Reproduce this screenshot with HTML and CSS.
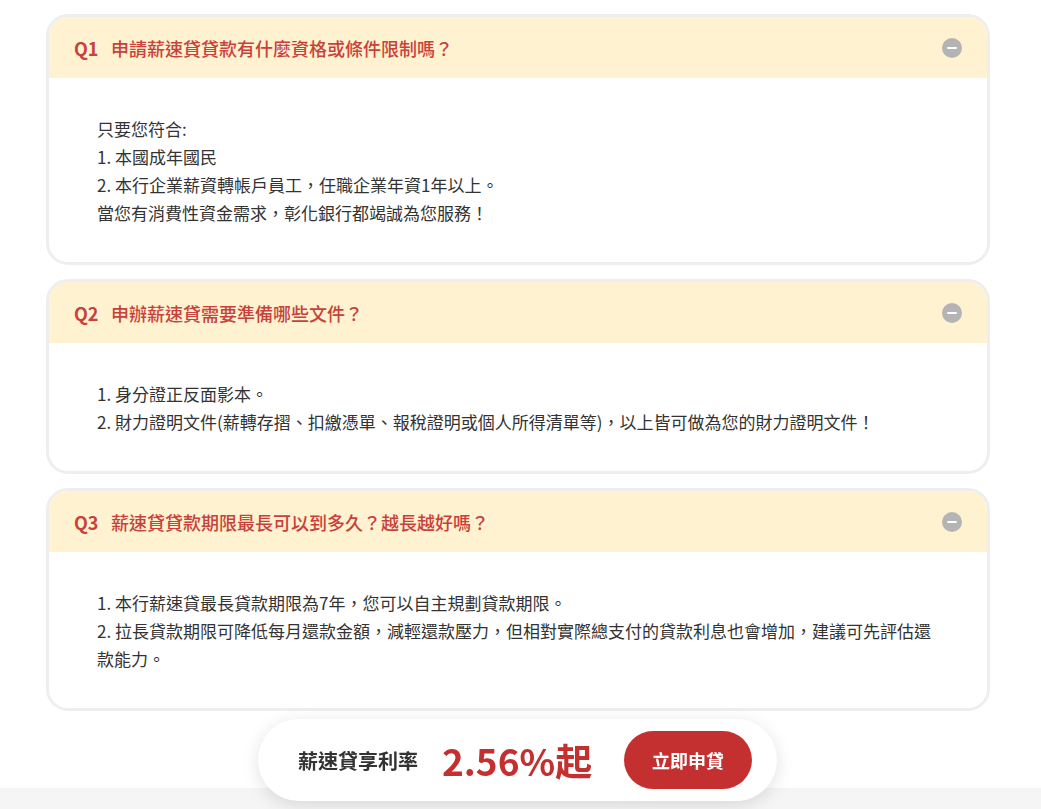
FILE: index.html
```html
<!DOCTYPE html>
<html lang="zh-Hant">
<head>
<meta charset="utf-8">
<title>FAQ</title>
<link rel="stylesheet" href="styles.css">
</head>
<body>
<main class="faq">
  <section class="card">
    <div class="card-head">
      <span class="q">Q1</span>
      <span class="title">申請薪速貸貸款有什麼資格或條件限制嗎？</span>
      <span class="toggle"></span>
    </div>
    <div class="card-body">
      <p>只要您符合:</p>
      <p>1. 本國成年國民</p>
      <p>2. 本行企業薪資轉帳戶員工，任職企業年資1年以上。</p>
      <p>當您有消費性資金需求，彰化銀行都竭誠為您服務！</p>
    </div>
  </section>
  <section class="card">
    <div class="card-head">
      <span class="q">Q2</span>
      <span class="title">申辦薪速貸需要準備哪些文件？</span>
      <span class="toggle"></span>
    </div>
    <div class="card-body">
      <p>1. 身分證正反面影本。</p>
      <p>2. 財力證明文件(薪轉存摺、扣繳憑單、報稅證明或個人所得清單等)，以上皆可做為您的財力證明文件！</p>
    </div>
  </section>
  <section class="card">
    <div class="card-head">
      <span class="q">Q3</span>
      <span class="title">薪速貸貸款期限最長可以到多久？越長越好嗎？</span>
      <span class="toggle"></span>
    </div>
    <div class="card-body">
      <p>1. 本行薪速貸最長貸款期限為7年，您可以自主規劃貸款期限。</p>
      <p>2. 拉長貸款期限可降低每月還款金額，減輕還款壓力，但相對實際總支付的貸款利息也會增加，建議可先評估還款能力。</p>
    </div>
  </section>
</main>
<footer class="footer"></footer>
<div class="promo">
  <span class="promo-label">薪速貸享利率</span>
  <span class="promo-rate">2.56%起</span>
  <a class="promo-btn" href="#">立即申貸</a>
</div>
</body>
</html>
```
FILE: styles.css
```css
* { box-sizing: border-box; }
html, body { margin: 0; padding: 0; background: #fff; }
body {
  font-family: "Noto Sans CJK TC", "Noto Sans", sans-serif;
  color: #333;
  height: 809px;
  overflow: hidden;
  display: flex;
  flex-direction: column;
}
.faq {
  width: 944px;
  margin: 0 0 0 46px;
  padding: 14px 0 77px;
  display: flex;
  flex-direction: column;
  gap: 14px;
}
.card {
  border: 3px solid #eeeeee;
  border-radius: 22px;
  overflow: hidden;
  background: #fff;
}
.card-head {
  height: 61px;
  background: #fff2d0;
  display: flex;
  align-items: center;
  padding: 0 25px 0 25px;
  color: #c8413b;
  font-size: 18px;
}
.q {
  font-weight: 700;
  width: 37px;
  flex: none;
}
.title {
  flex: 1;
  font-weight: 500;
}
.toggle {
  width: 20px;
  height: 20px;
  border-radius: 50%;
  background: #b4b4b4;
  position: relative;
  flex: none;
}
.toggle::after {
  content: "";
  position: absolute;
  left: 5px;
  top: 9px;
  width: 10px;
  height: 2.5px;
  border-radius: 1px;
  background: #fff;
}
.card-body {
  padding: 37px 48px 35px 48px;
  font-size: 17px;
  line-height: 28px;
  color: #333;
}
.card-body p { margin: 0; }
.footer {
  flex: 1;
  background: #f5f5f5;
}
.promo {
  position: fixed;
  left: 258px;
  bottom: 8px;
  width: 519px;
  height: 82px;
  background: #fff;
  border-radius: 41px;
  box-shadow: 0 4px 18px rgba(0,0,0,0.12);
  display: flex;
  align-items: center;
  padding: 0 25px 0 40px;
}
.promo-label {
  font-size: 20px;
  font-weight: 700;
  color: #333;
  margin-right: 24px;
}
.promo-rate {
  font-size: 37px;
  font-weight: 700;
  color: #c3302f;
  margin-right: auto;
  line-height: 1;
}
.promo-btn {
  width: 128px;
  height: 58px;
  border-radius: 29px;
  background: #c3302f;
  color: #fff;
  font-size: 18px;
  font-weight: 700;
  text-decoration: none;
  display: flex;
  align-items: center;
  justify-content: center;
}
```
